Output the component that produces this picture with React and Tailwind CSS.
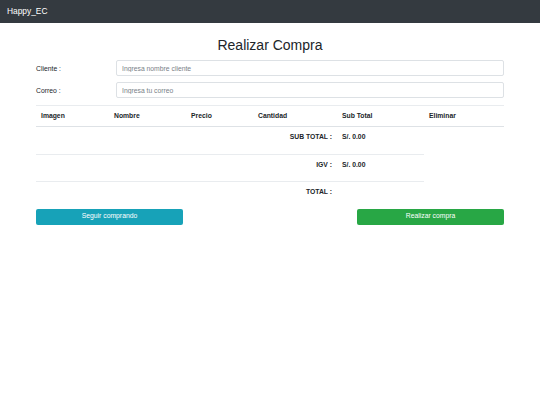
import React from "react";

const font = { fontFamily: '"Liberation Sans", Arial, sans-serif' };

export default function App() {
  const cols = [73, 77, 67, 84, 87, 80];
  return (
    <div className="min-h-[405px] w-[540px] bg-white text-[#212529]" style={font}>
      <nav className="h-[23px] bg-[#343a40] flex items-center px-[7px]">
        <span className="text-white text-[8.4px] leading-none">Happy_EC</span>
      </nav>
      <div className="w-[468px] mx-auto">
        <h3 className="text-[14px] leading-[17px] text-center mt-[14px] mb-[6px] font-normal">Realizar Compra</h3>
        <div className="flex items-center h-[16px]">
          <label className="w-[80px] text-[6.8px] leading-[8px] pt-[1px]">Cliente :</label>
          <input
            className="flex-1 h-[16px] border border-[#dde1e5] rounded-[2px] px-[5px] text-[6.8px] placeholder:text-[#7a8188] outline-none"
            placeholder="Ingresa nombre cliente"
          />
        </div>
        <div className="flex items-center h-[16px] mt-[6px]">
          <label className="w-[80px] text-[6.8px] leading-[8px] pt-[1px]">Correo :</label>
          <input
            className="flex-1 h-[16px] border border-[#dde1e5] rounded-[2px] px-[5px] text-[6.8px] placeholder:text-[#7a8188] outline-none"
            placeholder="Ingresa tu correo"
          />
        </div>
        <table className="w-full table-fixed border-collapse mt-[7px] text-[6.8px]">
          <colgroup>
            {cols.map((w, i) => (
              <col key={i} style={{ width: w }} />
            ))}
          </colgroup>
          <thead>
            <tr className="h-[21px]">
              {["Imagen", "Nombre", "Precio", "Cantidad", "Sub Total", "Eliminar"].map((h) => (
                <th
                  key={h}
                  className="text-left font-bold px-[5px] py-0 border-t border-t-[#e9ecef] border-b border-b-[#dee2e6] align-middle"
                >
                  {h}
                </th>
              ))}
            </tr>
          </thead>
          <tbody>
            <tr className="h-[28px]">
              <td colSpan={4} className="text-right font-bold px-[5px] pt-[5px] align-top">SUB TOTAL :</td>
              <td className="font-bold px-[5px] pt-[5px] align-top">S/. 0.00</td>
            </tr>
            <tr className="h-[27px]">
              <td colSpan={4} className="text-right font-bold px-[5px] pt-[5px] align-top border-t border-[#e9ecef]">IGV :</td>
              <td className="font-bold px-[5px] pt-[5px] align-top border-t border-[#e9ecef]">S/. 0.00</td>
            </tr>
            <tr className="h-[20px]">
              <td colSpan={4} className="text-right font-bold px-[5px] pt-[5px] align-top border-t border-[#e9ecef]">TOTAL :</td>
              <td className="px-[5px] pt-[5px] align-top border-t border-[#e9ecef]"></td>
            </tr>
          </tbody>
        </table>
        <div className="flex justify-between mt-[7px]">
          <button className="w-[147px] h-[16px] bg-[#17a2b8] text-white text-[6.8px] rounded-[2px] flex items-center justify-center">
            Seguir comprando
          </button>
          <button className="w-[147px] h-[16px] bg-[#28a745] text-white text-[6.8px] rounded-[2px] flex items-center justify-center">
            Realizar compra
          </button>
        </div>
      </div>
    </div>
  );
}
